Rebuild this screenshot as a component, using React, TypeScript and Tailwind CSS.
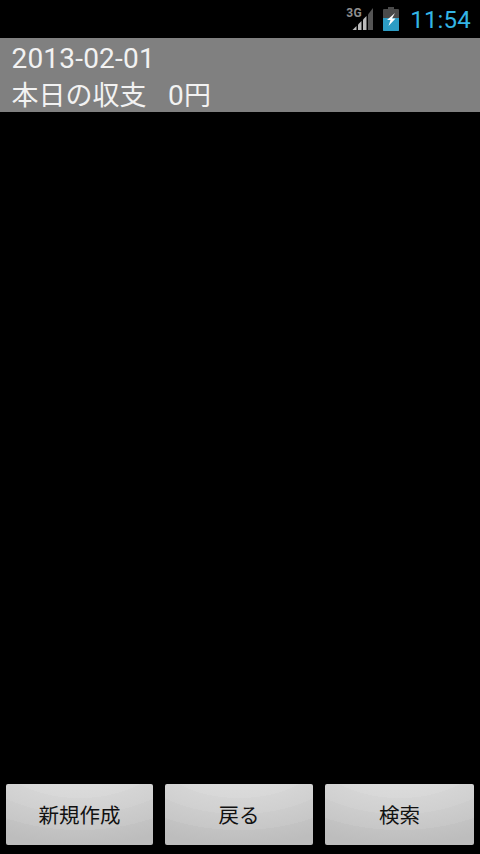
import { ReactNode } from "react"

function Btn({ w, children }: { w: string; children: ReactNode }) {
  return (
    <button className={`${w} h-[61px] rounded-[2px] bg-[radial-gradient(ellipse_170px_100px_at_50%_-38px,#dbdbdb_40%,#d8d8d8_52%,#d5d5d5_52%,#d0d0d0_68%,#cdcdcd_68%,#c7c7c7_84%,#c3c3c3_84%,#bdbdbd_99%)] pt-[4px] text-[20.5px] leading-none text-[#111]`}>
      {children}
    </button>
  )
}

export default function App() {
  return (
    <div className="flex h-[854px] w-[480px] flex-col overflow-hidden bg-black font-['Roboto','Noto_Sans_CJK_JP',sans-serif]">
      {/* status bar */}
      <div className="flex h-[38px] items-start justify-end pr-[9px]">
        <div className="relative mr-[9px] mt-[6px] h-[25px] w-[28px]">
          <span className="absolute left-0 top-[1px] text-[12px] font-bold leading-none tracking-[0.5px] text-[#8f8f8f]">3G</span>
          <svg viewBox="0 0 22 23" className="absolute bottom-[1px] right-0 h-[23px] w-[22px]">
            <path d="M0.5 23 L4.5 19 V23 Z" fill="#bcbcbc" />
            <path d="M6 23 V17.5 L9.5 14 V23 Z" fill="#bcbcbc" />
            <path d="M11 23 V12.5 L14.5 9 V23 Z" fill="#bcbcbc" />
            <path d="M16 23 V7.5 L21 1 V23 Z" fill="#555555" />
          </svg>
        </div>
        <svg viewBox="0 0 16 24" className="mr-[11px] mt-[7px] h-[24px] w-[16px]">
          <path d="M5 0 H11 V2 H15 Q16 2 16 3 V24 H0 V3 Q0 2 1 2 H5 Z" fill="#4a4a4a" />
          <path d="M0 11 H16 V23 Q16 24 15 24 H1 Q0 24 0 23 Z" fill="#2c9cc4" />
          <path d="M12 6 L4 13 H7.5 L5.5 19 L12.5 11.5 H9 L12 6 Z" fill="#ffffff" />
        </svg>
        <span className="mt-[8px] text-[24px] leading-none tracking-[0.2px] text-[#33b5e5]">11:54</span>
      </div>

      {/* summary header */}
      <div className="flex h-[74px] flex-col bg-[#808080] pl-[11.5px] pt-[2px] text-[28px] leading-[37px] tracking-[0.2px] text-[#f2f2f2]">
        <div>2013-02-01</div>
        <div className="whitespace-pre">
          <span className="text-[27px] tracking-normal">本日の収支</span>
          {"   0"}
          <span className="text-[27px] tracking-normal">円</span>
        </div>
      </div>

      <div className="flex-1" />

      {/* bottom buttons */}
      <div className="flex gap-[12px] px-[6px] pb-[9px]">
        <Btn w="w-[147px]">新規作成</Btn>
        <Btn w="w-[148px]">戻る</Btn>
        <Btn w="w-[149px]">検索</Btn>
      </div>
    </div>
  )
}
